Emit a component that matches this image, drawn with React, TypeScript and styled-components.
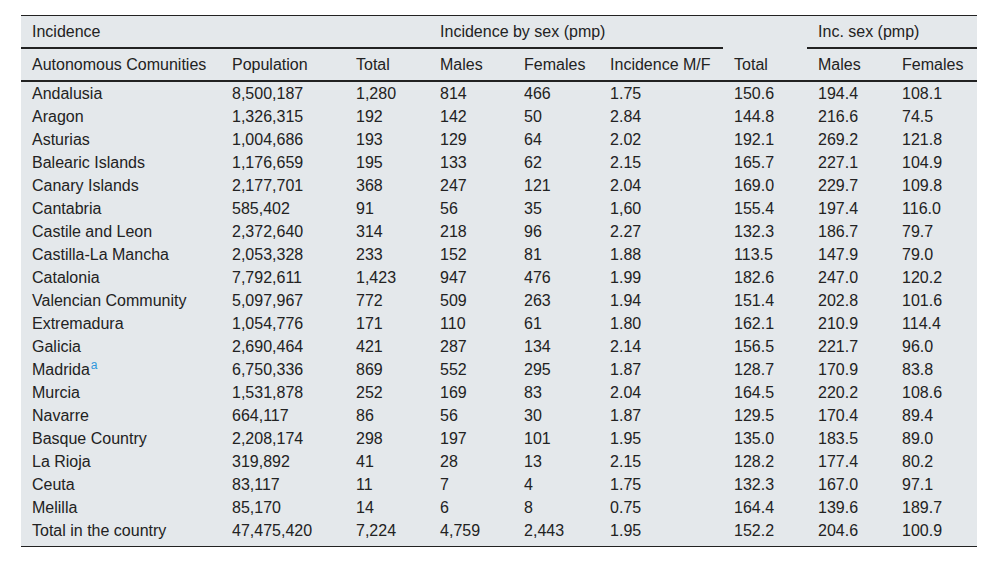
import React from "react";
import styled, { createGlobalStyle } from "styled-components";

const Global = createGlobalStyle`
  html, body { margin: 0; padding: 0; background: #fff; }
  body { font-family: "Liberation Sans", Arial, sans-serif; }
`;

const Page = styled.div`
  padding: 15px 23px 0 21px;
`;

const Table = styled.table`
  width: 956px;
  border-collapse: collapse;
  table-layout: fixed;
  background: #e4e8eb;
  color: #222;
  font-size: 16px;
  border-top: 1px solid #222;
  border-bottom: 1px solid #222;
`;

const HeadCell = styled.th<{ $line?: boolean }>`
  height: 31px;
  padding: 0 11px;
  text-align: left;
  font-weight: normal;
  white-space: nowrap;
  vertical-align: middle;
  border-bottom: ${(p) => (p.$line ? "2px solid #222" : "2px solid transparent")};
`;

const SubHead = styled.th`
  height: 31px;
  padding: 0 11px;
  text-align: left;
  font-weight: normal;
  white-space: nowrap;
  border-bottom: 2px solid #222;
`;

const Row = styled.tr<{ $last?: boolean }>`
  td {
    height: ${(p) => (p.$last ? "27px" : "23px")};
    vertical-align: ${(p) => (p.$last ? "top" : "middle")};
    line-height: 23px;
  }
`;

const Cell = styled.td`
  padding: 0 11px;
  white-space: nowrap;
`;

const Note = styled.sup`
  color: #2f97dc;
  font-size: 12px;
  vertical-align: 6px;
  line-height: 0;
  margin-left: 1px;
`;

const widths = [200, 124, 84, 84, 86, 124, 84, 84, 86];

type R = [string, string, string, string, string, string, string, string, string];

const rows: R[] = [
  ["Andalusia", "8,500,187", "1,280", "814", "466", "1.75", "150.6", "194.4", "108.1"],
  ["Aragon", "1,326,315", "192", "142", "50", "2.84", "144.8", "216.6", "74.5"],
  ["Asturias", "1,004,686", "193", "129", "64", "2.02", "192.1", "269.2", "121.8"],
  ["Balearic Islands", "1,176,659", "195", "133", "62", "2.15", "165.7", "227.1", "104.9"],
  ["Canary Islands", "2,177,701", "368", "247", "121", "2.04", "169.0", "229.7", "109.8"],
  ["Cantabria", "585,402", "91", "56", "35", "1,60", "155.4", "197.4", "116.0"],
  ["Castile and Leon", "2,372,640", "314", "218", "96", "2.27", "132.3", "186.7", "79.7"],
  ["Castilla-La Mancha", "2,053,328", "233", "152", "81", "1.88", "113.5", "147.9", "79.0"],
  ["Catalonia", "7,792,611", "1,423", "947", "476", "1.99", "182.6", "247.0", "120.2"],
  ["Valencian Community", "5,097,967", "772", "509", "263", "1.94", "151.4", "202.8", "101.6"],
  ["Extremadura", "1,054,776", "171", "110", "61", "1.80", "162.1", "210.9", "114.4"],
  ["Galicia", "2,690,464", "421", "287", "134", "2.14", "156.5", "221.7", "96.0"],
  ["Madrida", "6,750,336", "869", "552", "295", "1.87", "128.7", "170.9", "83.8"],
  ["Murcia", "1,531,878", "252", "169", "83", "2.04", "164.5", "220.2", "108.6"],
  ["Navarre", "664,117", "86", "56", "30", "1.87", "129.5", "170.4", "89.4"],
  ["Basque Country", "2,208,174", "298", "197", "101", "1.95", "135.0", "183.5", "89.0"],
  ["La Rioja", "319,892", "41", "28", "13", "2.15", "128.2", "177.4", "80.2"],
  ["Ceuta", "83,117", "11", "7", "4", "1.75", "132.3", "167.0", "97.1"],
  ["Melilla", "85,170", "14", "6", "8", "0.75", "164.4", "139.6", "189.7"],
  ["Total in the country", "47,475,420", "7,224", "4,759", "2,443", "1.95", "152.2", "204.6", "100.9"],
];

const subHeads = [
  "Autonomous Comunities",
  "Population",
  "Total",
  "Males",
  "Females",
  "Incidence M/F",
  "Total",
  "Males",
  "Females",
];

export default function App() {
  return (
    <Page>
      <Global />
      <Table>
        <colgroup>
          {widths.map((w, i) => (
            <col key={i} style={{ width: w }} />
          ))}
        </colgroup>
        <thead>
          <tr>
            <HeadCell colSpan={3} $line>
              Incidence
            </HeadCell>
            <HeadCell colSpan={3} $line>
              Incidence by sex (pmp)
            </HeadCell>
            <HeadCell />
            <HeadCell colSpan={2} $line>
              Inc. sex (pmp)
            </HeadCell>
          </tr>
          <tr>
            {subHeads.map((h, i) => (
              <SubHead key={i}>{h}</SubHead>
            ))}
          </tr>
        </thead>
        <tbody>
          {rows.map((r, i) => (
            <Row key={i} $last={i === rows.length - 1}>
              {r.map((c, j) => (
                <Cell key={j}>
                  {c}
                  {j === 0 && c === "Madrida" ? <Note>a</Note> : null}
                </Cell>
              ))}
            </Row>
          ))}
        </tbody>
      </Table>
    </Page>
  );
}
